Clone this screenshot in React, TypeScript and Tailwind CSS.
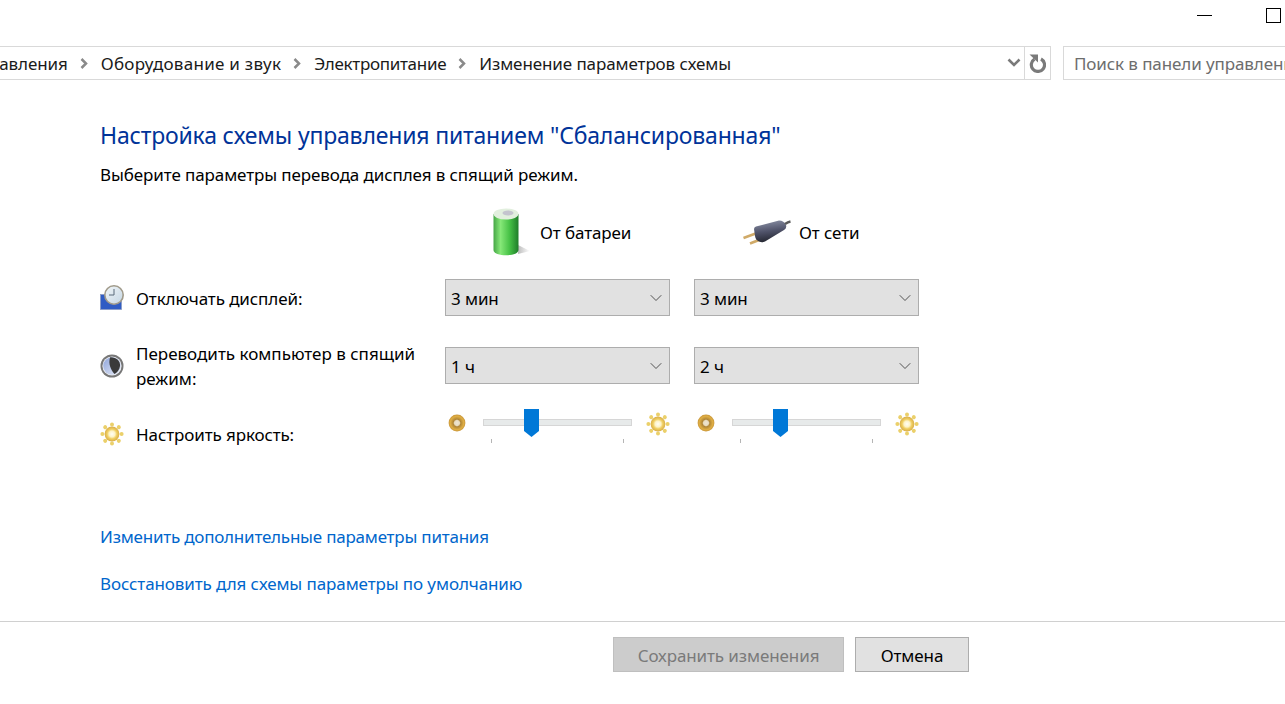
import { ChevronDown } from "lucide-react";

const FONT = { fontFamily: '"Noto Sans", "Open Sans", sans-serif' };

function Sep() {
  return (
    <svg width="8" height="11" viewBox="0 0 8 11" className="ml-[12px] mr-[13px] shrink-0">
      <path d="M1.5 1 L6 5.5 L1.5 10" fill="none" stroke="#8a8a8a" strokeWidth="2.5" />
    </svg>
  );
}

function BatteryIcon() {
  return (
    <svg width="38" height="48" viewBox="0 0 38 48">
      <defs>
        <linearGradient id="bat" x1="0" x2="1" y1="0" y2="0">
          <stop offset="0" stopColor="#46a646" />
          <stop offset="0.28" stopColor="#86e878" />
          <stop offset="0.65" stopColor="#45c045" />
          <stop offset="1" stopColor="#1f7d2a" />
        </linearGradient>
        <linearGradient id="batshadow" x1="0" x2="1" y1="0" y2="0">
          <stop offset="0" stopColor="#bdbdbd" />
          <stop offset="1" stopColor="#ffffff" />
        </linearGradient>
      </defs>
      <path d="M25 37 L37 43 L25 46 Z" fill="url(#batshadow)" />
      <path d="M0.5 6 V42 C0.5 49 25.5 49 25.5 42 V6 Z" fill="url(#bat)" />
      <ellipse cx="13" cy="6" rx="12.5" ry="5.5" fill="#e2efde" />
      <ellipse cx="15" cy="5" rx="5.5" ry="2.6" fill="#c4c4ce" />
    </svg>
  );
}

function PlugIcon() {
  return (
    <svg width="48" height="25" viewBox="0 0 48 25">
      <defs>
        <linearGradient id="plug" x1="0.3" x2="0.5" y1="0" y2="1">
          <stop offset="0" stopColor="#8a90a5" />
          <stop offset="0.5" stopColor="#50536a" />
          <stop offset="1" stopColor="#22242e" />
        </linearGradient>
      </defs>
      <path d="M0.5 18 L14 13" stroke="#d0aa68" strokeWidth="2.6" />
      <path d="M7 23.5 L21 18" stroke="#d0aa68" strokeWidth="2.6" />
      <path d="M13 6.5 Q11 7 11 9 L12 16 Q12.5 20 16 21.5 Q19 23 22 21.5 L41 10 Q44 8 43 5 Q41 0.5 36 0.5 Z" fill="url(#plug)" />
      <path d="M42 4 C43.5 3 45 2 47.5 1.5" fill="none" stroke="#5a5a5a" strokeWidth="2.6" />
    </svg>
  );
}

function ClockIcon() {
  return (
    <svg width="24" height="25" viewBox="0 0 24 25">
      <defs>
        <linearGradient id="face" x1="0" x2="1" y1="0" y2="1">
          <stop offset="0" stopColor="#f2f6f8" />
          <stop offset="1" stopColor="#c4d6e4" />
        </linearGradient>
      </defs>
      <rect x="0.5" y="9.5" width="21" height="15" fill="#2f5cc4" stroke="#8a9bc4" strokeWidth="0.8" />
      <circle cx="14" cy="10" r="9.2" fill="url(#face)" stroke="#a09a8a" strokeWidth="1.6" />
      <path d="M14 4 V10 H9" fill="none" stroke="#5b6b7b" strokeWidth="1" />
    </svg>
  );
}

function MoonIcon() {
  return (
    <svg width="24" height="24" viewBox="0 0 24 24">
      <defs>
        <linearGradient id="moon" x1="0" x2="1" y1="0" y2="1">
          <stop offset="0" stopColor="#8fa5dc" />
          <stop offset="1" stopColor="#e6ebf6" />
        </linearGradient>
      </defs>
      <circle cx="12" cy="12" r="11.5" fill="#777" />
      <circle cx="12" cy="12" r="9.6" fill="#eef0f4" />
      <circle cx="12" cy="12" r="8.8" fill="url(#moon)" />
      <path d="M10 3.4 C16 3 20.5 7 20 12 C19.5 16 17 18.5 14.5 20 C11 16 8 10 10 3.4 Z" fill="#3a3a3a" />
    </svg>
  );
}

function SunIcon() {
  const rays = [0, 45, 90, 135, 180, 225, 270, 315];
  return (
    <svg width="24" height="24" viewBox="0 0 24 24" className="shrink-0">
      <defs>
        <radialGradient id="sun">
          <stop offset="0" stopColor="#fffef6" />
          <stop offset="0.4" stopColor="#fdf3c8" />
          <stop offset="0.65" stopColor="#f0cf62" />
          <stop offset="1" stopColor="#d8ad48" />
        </radialGradient>
      </defs>
      {rays.map((a) => (
        <circle key={a} cx="12" cy="2.4" r="2" fill="#ebd06a" transform={`rotate(${a} 12 12)`} />
      ))}
      <circle cx="12" cy="12" r="7.4" fill="url(#sun)" />
    </svg>
  );
}

function SmallSun() {
  return (
    <svg width="18" height="18" viewBox="0 0 18 18" className="shrink-0">
      <defs>
        <radialGradient id="smallsun">
          <stop offset="0" stopColor="#efe6d2" />
          <stop offset="0.3" stopColor="#e8dcc0" />
          <stop offset="0.45" stopColor="#b08636" />
          <stop offset="0.8" stopColor="#dfae44" />
          <stop offset="1" stopColor="#c8963a" />
        </radialGradient>
      </defs>
      <circle cx="9" cy="9" r="8.4" fill="url(#smallsun)" />
    </svg>
  );
}

function Combo({ value }: { value: string }) {
  return (
    <div className="h-[37px] flex items-center justify-between bg-[#e1e1e1] border border-[#adadad] pl-[5px] pr-[3px]">
      <span className="pt-px">{value}</span>
      <ChevronDown size={20} strokeWidth={1.1} className="text-[#444]" />
    </div>
  );
}

function Slider() {
  return (
    <div className="h-[37px] flex items-start self-start mt-[-6px] pl-[3px]">
      <div className="mt-[5px]">
        <SmallSun />
      </div>
      <div className="relative w-[149px] h-[37px] ml-[17px] mr-[14px]">
        <div className="absolute left-0 right-0 top-[10px] h-[7px] bg-[#e7eaea] border border-[#d6d6d6]" />
        <svg width="15" height="28" viewBox="0 0 15 28" className="absolute left-[41px] top-0">
          <path d="M0 0 H15 V22 L7.5 28 L0 22 Z" fill="#0078d7" />
        </svg>
        <div className="absolute left-[8px] top-[30px] w-px h-[4px] bg-[#b5b5b5]" />
        <div className="absolute left-[140px] top-[30px] w-px h-[4px] bg-[#b5b5b5]" />
      </div>
      <div className="mt-[3px]">
        <SunIcon />
      </div>
    </div>
  );
}

export default function App() {
  return (
    <div style={FONT} className="w-[1285px] h-[704px] overflow-hidden bg-white text-black text-[17px] tracking-[-0.1px]">
      {/* window buttons */}
      <div className="h-[46px] flex justify-end items-start">
        <div className="w-[15px] h-px bg-black mt-[15px] mr-[54px]" />
        <div className="w-[15px] h-[15px] border border-black mt-[8px] mr-[4px]" />
      </div>

      {/* address bar */}
      <div className="h-[34px] flex">
        <div className="w-[1051px] shrink-0 flex items-center border border-l-0 border-[#d9d9d9] text-[#1a1a1a] overflow-hidden">
          <div className="flex-1 flex items-center min-w-0 pt-px">
            <span className="ml-[-11px]">равления</span>
            <Sep />
            <span className="tracking-[0.27px]">Оборудование и звук</span>
            <Sep />
            <span className="tracking-[-0.3px]">Электропитание</span>
            <Sep />
            <span>Изменение параметров схемы</span>
          </div>
          <svg width="14" height="10" viewBox="0 0 14 10" className="mr-[3px]">
            <path d="M1.5 1.5 L7 7 L12.5 1.5" fill="none" stroke="#7a7a7a" strokeWidth="2.6" />
          </svg>
          <div className="w-[26px] h-full border-l border-[#d9d9d9] flex items-center justify-center">
            <svg width="17" height="19" viewBox="0 0 17 19">
              <path d="M5.5 5.2 A6.6 6.6 0 1 0 12 5" fill="none" stroke="#7a7a7a" strokeWidth="3.2" />
              <path d="M0.5 0.5 H9 V8.5 Z" fill="#7a7a7a" />
            </svg>
          </div>
        </div>
        <div className="ml-[12px] flex-1 border border-r-0 border-[#d9d9d9] flex items-center pl-[10px] pt-px text-[#6d6d6d] whitespace-nowrap overflow-hidden">
          Поиск в панели управления
        </div>
      </div>

      {/* content */}
      <div className="pl-[100px] w-[919px] box-content">
        <h1 className="mt-[39px] text-[23px] tracking-[-0.18px] leading-[32px] text-[#003399]">
          Настройка схемы управления питанием "Сбалансированная"
        </h1>
        <p className="mt-[12px] leading-[24px]">
          Выберите параметры перевода дисплея в спящий режим.
        </p>

        <div className="mt-[21px] grid grid-cols-[345px_225px_24px_225px]">
          <div />
          <div className="h-[48px] flex items-center pl-[48px] gap-[9px]">
            <BatteryIcon />
            <span className="pt-px">От батареи</span>
          </div>
          <div />
          <div className="h-[48px] flex items-center pl-[49px] gap-[8px]">
            <PlugIcon />
            <span className="pt-px">От сети</span>
          </div>
        </div>

        <div className="mt-[23px] grid grid-cols-[36px_309px_225px_24px_225px] grid-rows-[37px_37px_37px] gap-y-[31px] leading-[25px] items-center">
          <ClockIcon />
          <span className="pt-px">Отключать дисплей:</span>
          <Combo value="3 мин" />
          <div />
          <Combo value="3 мин" />

          <MoonIcon />
          <span className="pt-px pr-[20px] tracking-[0px]">Переводить компьютер в спящий режим:</span>
          <Combo value="1 ч" />
          <div />
          <Combo value="2 ч" />

          <SunIcon />
          <span className="pt-px">Настроить яркость:</span>
          <Slider />
          <div />
          <Slider />
        </div>

        <div className="mt-[73px] leading-[24px] text-[#0066cc] flex flex-col gap-[23px]">
          <span className="tracking-[-0.22px]">Изменить дополнительные параметры питания</span>
          <span>Восстановить для схемы параметры по умолчанию</span>
        </div>
      </div>

      {/* footer */}
      <div className="mt-[25px] border-t border-[#d0d0d0] pt-[15px] flex justify-start pl-[613px] gap-[11px]">
        <div className="w-[231px] h-[35px] flex items-center justify-center pt-[2px] bg-[#cccccc] border border-[#bfbfbf] text-[#7a7a7a]">
          Сохранить изменения
        </div>
        <div className="w-[114px] h-[35px] flex items-center justify-center pt-[2px] bg-[#e1e1e1] border border-[#adadad]">
          Отмена
        </div>
      </div>
    </div>
  );
}
